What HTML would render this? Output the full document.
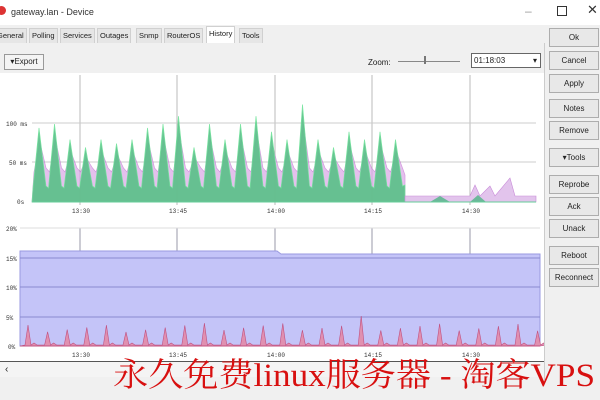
<!DOCTYPE html><html><head><style>
body{margin:0;width:600px;height:400px;overflow:hidden;background:#f0f0f0;font-family:"Liberation Sans",sans-serif;font-size:8px;color:#222;position:relative}
.a{position:absolute}
.btn{position:absolute;left:549px;width:48px;height:17px;border:1px solid #adadad;background:#e8e8e8;text-align:center;line-height:17px;font-size:8px}
.tab{position:absolute;top:28px;height:14px;line-height:14px;background:#e6e6e6;border:1px solid #d0d0d0;font-size:7.5px;padding:0 2px}
</style></head><body>
<div class="a" style="left:0;top:0;width:600px;height:25px;background:#fff"></div>
<div class="a" style="left:-3px;top:6px;width:9px;height:9px;border-radius:50%;background:#d33"></div>
<div class="a" style="left:11px;top:7px;font-size:9px;color:#333">gateway.lan - Device</div>
<div class="a" style="left:525px;top:4px;font-size:12px;color:#999">–</div>
<div class="a" style="left:557px;top:6px;width:8px;height:8px;border:1px solid #333"></div>
<div class="a" style="left:587px;top:2px;font-size:13px;color:#333">✕</div>
<div class="tab" style="left:-6px">General</div>
<div class="tab" style="left:29px">Polling</div>
<div class="tab" style="left:60px">Services</div>
<div class="tab" style="left:97px">Outages</div>
<div class="tab" style="left:136px">Snmp</div>
<div class="tab" style="left:164px">RouterOS</div>
<div class="tab" style="left:206px;background:#fff;top:26px;height:16px">History</div>
<div class="tab" style="left:239px">Tools</div>
<div class="a" style="left:0;top:43px;width:544px;height:337px;background:#f0f0f0;border-right:1px solid #ccc"></div>
<div class="a" style="left:4px;top:54px;width:38px;height:14px;border:1px solid #999;background:#f4f4f4;line-height:14px;text-align:center">▾Export</div>
<div class="a" style="left:368px;top:58px">Zoom:</div>
<div class="a" style="left:398px;top:61px;width:62px;height:1px;background:#888"></div>
<div class="a" style="left:424px;top:56px;width:2px;height:8px;background:#777"></div>
<div class="a" style="left:471px;top:53px;width:66px;height:13px;border:1px solid #666;background:#fff;line-height:13px;padding-left:2px">01:18:03<span style="float:right;margin-right:3px">▾</span></div>
<svg class="a" style="left:0;top:73px" width="544" height="289" id="s"></svg>
<div class="a" style="left:0;top:361px;width:544px;height:1px;background:#555"></div>
<div class="a" style="left:0;top:362px;width:544px;height:15px;background:#f4f4f4"></div>
<div class="a" style="left:5px;top:364px;font-size:10px">‹</div>
<div class="btn" style="top:28px">Ok</div>
<div class="btn" style="top:51px">Cancel</div>
<div class="btn" style="top:74px">Apply</div>
<div class="btn" style="top:99px">Notes</div>
<div class="btn" style="top:121px">Remove</div>
<div class="btn" style="top:148px">▾Tools</div>
<div class="btn" style="top:175px">Reprobe</div>
<div class="btn" style="top:197px">Ack</div>
<div class="btn" style="top:219px">Unack</div>
<div class="btn" style="top:246px">Reboot</div>
<div class="btn" style="top:268px">Reconnect</div>
<svg class="a" style="left:0;top:0" width="600" height="400"><text x="113" y="386" font-size="33" fill="#d81010" textLength="482" lengthAdjust="spacingAndGlyphs" font-family="'Liberation Serif','Noto Serif CJK SC',serif">永久免费linux服务器 - 淘客VPS</text></svg>
<script>
var s=document.getElementById('s'),o=73,h='<rect width="544" height="289" fill="#fff"/>';
function L(x1,y1,x2,y2,c){h+='<line x1="'+x1+'" y1="'+(y1-o)+'" x2="'+x2+'" y2="'+(y2-o)+'" stroke="'+c+'" stroke-width="1"/>';}
function T(x,y,t){h+='<text x="'+x+'" y="'+(y-o)+'" font-size="6" font-family="Liberation Mono" fill="#333">'+t+'</text>';}
[80,177,275,372,470].forEach(function(x){L(x,75,x,205,'#bbb');L(x,228,x,346,'#99a');});
[123,162].forEach(function(y){L(32,y,536,y,'#ccc');});
T(6,126,'100 ms');T(9,165,'50 ms');T(17,204,'0s');
['13:30','13:45','14:00','14:15','14:30'].forEach(function(t,i){var x=[80,177,275,372,470][i];T(x-8,213,t);T(x-8,357,t);});
var p1='M32,'+(202-o),p2='M32,'+(202-o);var pk=[95,100,80,70,80,75,80,95,100,110,70,100,80,100,110,90,80,125,80,70,90,80,90,80];
for(var i=0;i<pk.length;i++){var x=32+i*15.5;var hh=pk[i]*0.78;p1+=' L'+(x+1)+','+(188-o)+' L'+(x+7)+','+(202-hh-o)+' L'+(x+14)+','+(186-o);p2+=' L'+(x+2)+','+(172-o)+' L'+(x+8)+','+(202-hh*0.8-o)+' L'+(x+14)+','+(168-o);}
p1+=' L405,'+(185-o)+' L405,'+(202-o)+'Z';p2+=' L405,'+(175-o)+' L405,'+(202-o)+'Z';
h+='<path d="'+p2+'" fill="#d9a6e6" opacity="0.7" stroke="#c070d0" stroke-width="0.7"/>';
h+='<path d="'+p1+'" fill="#5cc08a" opacity="0.92" stroke="#6fe39a" stroke-width="0.7"/>';
h+='<path d="M405,'+(196-o)+' L470,'+(196-o)+' L475,'+(185-o)+' L480,'+(196-o)+' L490,'+(186-o)+' L495,'+(196-o)+' L510,'+(178-o)+' L515,'+(196-o)+' L536,'+(196-o)+' L536,'+(202-o)+' L405,'+(202-o)+'Z" fill="#e2c4ec" stroke="#c88ad8" stroke-width="0.6"/>';
h+='<path d="M430,'+(202-o)+' L440,'+(196-o)+' L450,'+(202-o)+' M470,'+(202-o)+' L478,'+(195-o)+' L486,'+(202-o)+'" fill="#6cb89a"/>';
L(32,202,536,202,'#6c9');
h+='<path d="M20,'+(251-o)+' L277,'+(251-o)+' L281,'+(254-o)+' L540,'+(254-o)+' L540,'+(346-o)+' L20,'+(346-o)+'Z" fill="#c4c4f8" stroke="#9a9ae0"/>';
[258,287,317].forEach(function(y){L(20,y,540,y,'#8a8ad0');});
L(20,228,540,228,'#ddd');
T(6,231,'20%');T(6,261,'15%');T(6,290,'10%');T(6,320,'5%');T(8,349,'0%');
var p='M20,'+(346-o);for(var x=28;x<540;x+=19.6){var hh=(x>360&&x<375)?30:(14+((x*7)%9));p+=' L'+(x-3)+','+(345-o)+' L'+x+','+(346-hh-o)+' L'+(x+3)+','+(345-o)+' L'+(x+6)+','+(343-o)+' L'+(x+9)+','+(345-o);}
p+=' L540,'+(346-o)+'Z';h+='<path d="'+p+'" fill="#e090b0" stroke="#c05080" stroke-width="0.6"/>';
L(20,346,540,346,'#c05080');
s.innerHTML=h;
</script>
</body></html>
